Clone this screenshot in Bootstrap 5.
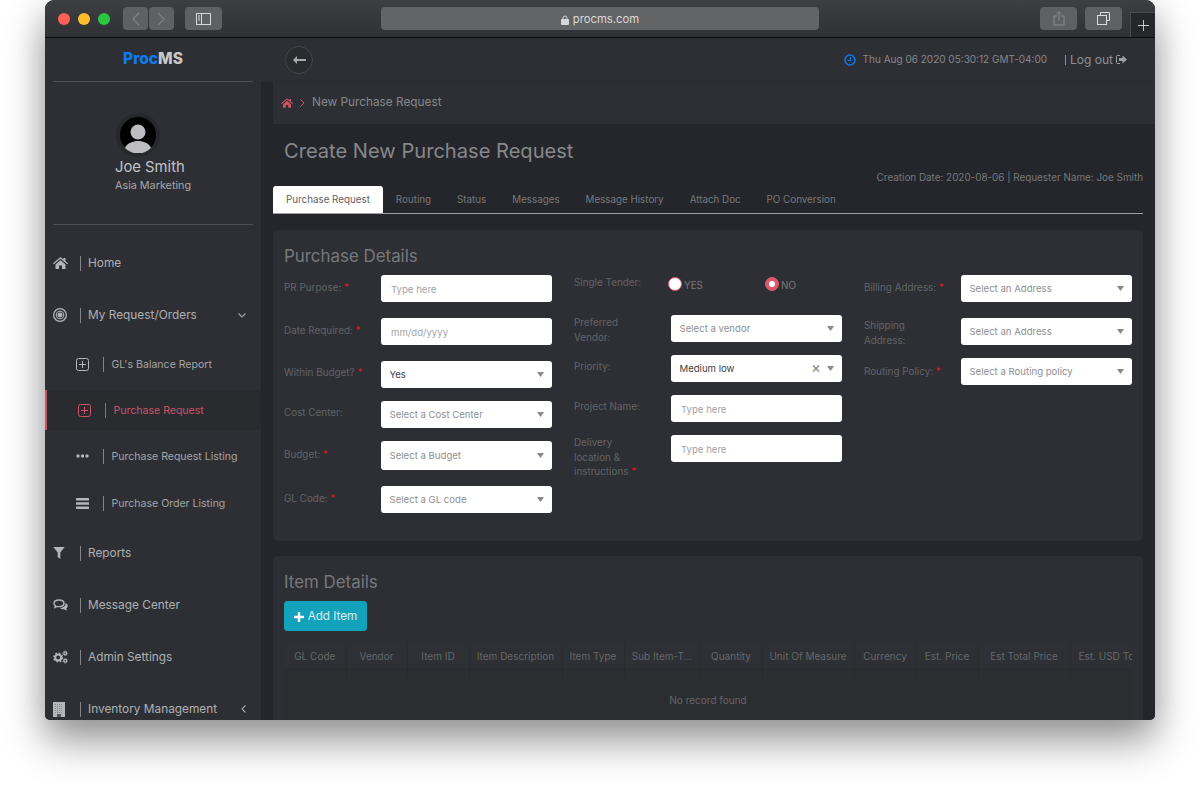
<!DOCTYPE html>
<html lang="en">
<head>
<meta charset="UTF-8" />
<title>ProcMS</title>
<link href="https://cdn.jsdelivr.net/npm/bootstrap@5.3.0/dist/css/bootstrap.min.css" rel="stylesheet" />
<style>
  html, body { height: 785px; overflow: hidden; background: #fff; }
  body { font-family: Inter, "Liberation Sans", sans-serif; }
  .mac-window { width: 1110px; height: 720px; margin-left: 45px; border-radius: 9px 9px 5px 5px; overflow: hidden; background: #2e2f34; }
  .window-shadow { width: 1110px; height: 720px; margin-left: 45px; position: absolute; top: 0; left: 0; border-radius: 9px; box-shadow: 0 22px 40px rgba(0,0,0,.38), 0 4px 30px rgba(0,0,0,.12); }
  .mac-bar { height: 38px; background: linear-gradient(#3e3f42, #303134); border-bottom: 1px solid #0b0b0c; position: relative; padding-left: 13px; }
  .light { width: 12px; height: 12px; border-radius: 50%; margin-right: 8px; }
  .mac-btn { height: 23px; background: #5f6062; border-radius: 4px; }
  .url-bar { width: 438px; height: 23px; background: #636466; border-radius: 4px; color: #d8d8d8; font-size: 11.3px; margin-left: 159px; padding-top: 2px; }
  .new-tab { position: absolute; right: 0; bottom: 0; width: 25px; height: 25px; background: #25262a; border: 1px solid #4a4b4e; border-right: 0; border-bottom: 0; }
  .app-body { height: 682px; }
  .side { width: 216px; background: #2e2f34; color: #aeafb3; flex: none; overflow: hidden; }
  .side-logo { height: 44px; margin: 0 8px; border-bottom: 1px solid #4e4f54; font-weight: 800; font-size: 15.5px; color: #c6c7ca; padding-bottom: 1px; }
  .side-logo span { color: #0d7bf2; }
  .side-user { height: 143px; margin: 0 8px; border-bottom: 1px solid #4e4f54; padding: 31px 0 0 62px; }
  .avatar { width: 44px; height: 44px; border-radius: 50%; background: #27282c; margin-left: 1px; }
  .user-name { font-size: 14.8px; line-height: 18px; margin-top: 1px; color: #c2c3c6; }
  .user-team { font-size: 10.8px; line-height: 16px; margin-top: 2px; color: #a6a7ab; }
  .side-menu { padding-top: 12px; }
  .menu-main { height: 52px; padding-left: 8px; font-size: 11.85px; }
  .menu-main .menu-ico { width: 15px; }
  .menu-main .menu-txt { margin-left: 12px; padding-left: 7px; border-left: 1px solid #85868a; line-height: 15px; }
  .menu-sub { height: 46px; padding-left: 31px; font-size: 10.55px; color: #a3a4a8; }
  .menu-sub.last-sub { height: 48px; }
  .menu-sub .menu-ico { width: 13px; }
  .menu-sub .menu-txt { margin-left: 14px; padding-left: 7.5px; border-left: 1px solid #85868a; line-height: 15px; }
  .menu-sub.on { height: 40px; margin: 3px 0; color: #cc5266; background: #2a2b2f; border-left: 2px solid #cc5266; padding-left: 31px; }
  .menu-sub.on .menu-txt { border-left-color: #cc5266; }
  .menu-arrow { margin-left: auto; margin-right: 15px; }
  .content { min-width: 0; background: #25262b; }
  .top-row { height: 44px; background: #2e2f34; padding: 0 28px 0 24px; border-bottom: 1px solid #2a2b30; color: #8f9094; }
  .back-btn { width: 28px; height: 28px; border: 1px solid #46474c; border-radius: 50%; background: #2a2b2f; }
  .clock-txt { font-size: 10px; color: #87888c; margin-left: 7px; margin-right: 18px; }
  .logout { font-size: 12px; color: #8f9094; }
  .crumb-bar { height: 42px; margin-left: 12px; background: #2e2f34; padding: 0 0 1px 8px; font-size: 11.8px; color: #86878b; }
  .crumb-bar .sep { color: #cc5266; margin: 0 7px; }
  .page-wrap { padding: 0 12px; height: 596px; overflow: hidden; }
  .page-title { font-size: 20.1px; font-weight: 400; color: #87888c; margin: 14px 0 0 11px; line-height: 27px; }
  .page-meta { font-size: 9.9px; color: #77787c; text-align: right; line-height: 14px; margin-top: 5px; }
  .pr-tabs { border-bottom: 1px solid #a0a1a4; margin-top: 2px; height: 28px; gap: 0; }
  .pr-tabs .nav-link { font-size: 9.8px; color: #77787c; height: 27px; padding: 0 13px; line-height: 27px; border: 0; border-radius: 3px 3px 0 0; }
  .pr-tabs .nav-link.active { background: #fff; color: #5d5e62; }
  .panel-box { background: #2e2f34; border-radius: 5px; padding: 11px; margin-top: 16px; }
  .panel-title { font-size: 16.9px; font-weight: 400; color: #77787c; line-height: 24px; margin: 3px 0 7px; }
  .pr-row { --bs-gutter-x: 22px; }
  .fld { display: flex; height: 27px; font-size: 9.9px; color: #626367; line-height: 14.5px; }
  .fld.tall-fld { height: 29px; }
  .fld > label { width: 97px; flex: none; padding-top: 5px; }
  .fld > label.lbl-top { padding-top: 0; }
  .fld > label.lbl-up { padding-top: 4px; }
  .fld > label.lbl-down { padding-top: 6px; }
  .fld .req { color: #d51a2c; }
  .fld .form-control, .fld .form-select { height: 100%; min-height: 0; padding: 1px 9px 0 10px; font-size: 9.6px; border: 0; border-radius: 3px; color: #8e8f93; box-shadow: none; }
  .fld .form-select { padding-left: 8.500px; background-image: url("data:image/svg+xml,%3Csvg xmlns='http://www.w3.org/2000/svg' viewBox='0 0 8 5'%3E%3Cpath fill='%23888' d='M0 0h8L4 5z'/%3E%3C/svg%3E"); background-size: 7px 4.500px; background-position: right 8px center; }
  .fld .form-control::placeholder { color: #a2a3a7; }
  .fld .form-select.picked { color: #3d3e42; }
  .gap-a { margin-bottom: 16px; }
  .gap-b { margin-bottom: 13px; }
  .clear-x { position: absolute; right: 21px; top: 6px; font-size: 15px; line-height: 14px; color: #86878b; }
  .fld.radio-row { height: 40px; padding-top: 2px; }
  .radio-row > label { padding-top: 0; margin-top: -2px; }
  .radio-row .form-check-input { width: 14px; height: 14px; margin: 0 2px 0 -3px; border: 1px solid #dc5a6e; flex: none; }
  .radio-row .form-check-input:checked { background-color: #dc5a6e; border-color: #dc5a6e; }
  .radio-lbl { color: #77787c; line-height: 14px; margin-top: 1px; }
  .add-btn { --bs-btn-bg: #12a2bb; --bs-btn-border-color: #12a2bb; font-size: 11.7px; height: 30px; width: 83px; padding: 1px 0 0; border-radius: 3px; color: #dcebee; }
  .grid-wrap { margin-top: 12px; background: #2c2d31; border-radius: 3px; }
  .grid-tbl { table-layout: fixed; width: 848px; margin: 0; --bs-table-bg: transparent; }
  .grid-tbl th, .grid-tbl td { font-size: 10px; font-weight: 400; color: #65666a; text-align: center; white-space: nowrap; overflow: hidden; padding: 0; border: 0; }
  .grid-tbl thead th { height: 25px; line-height: 24px; padding-top: 1px; background: #2f3035; border-right: 1px solid #2b2c30; }
  .grid-tbl thead th:last-child { border-right: 0; text-align: left; padding-left: 8px; }
  .grid-tbl .blank td { height: 16px; border-right: 1px solid #292a2e; }
  .grid-tbl .blank td:last-child { border-right: 0; }
  .grid-tbl .empty td { height: 48px; vertical-align: top; padding-top: 9px; }
</style>
</head>
<body>
<div class="window-shadow"></div>
<div class="mac-window position-relative">
  <div class="mac-bar d-flex align-items-center">
    <div class="light" style="background:#ff5f57"></div>
    <div class="light" style="background:#febc2e"></div>
    <div class="light" style="background:#28c840"></div>
    <div class="mac-btn d-flex align-items-center justify-content-center" style="width:25px;margin-left:5px">
      <svg width="9" height="14" viewBox="0 0 9 14"><path d="M8 1 2 7l6 6" fill="none" stroke="#818284" stroke-width="1.2"/></svg>
    </div>
    <div class="mac-btn d-flex align-items-center justify-content-center" style="width:25px;margin-left:1px">
      <svg width="9" height="14" viewBox="0 0 9 14"><path d="m1 1 6 6-6 6" fill="none" stroke="#818284" stroke-width="1.2"/></svg>
    </div>
    <div class="mac-btn d-flex align-items-center justify-content-center" style="width:37px;margin-left:11px">
      <svg width="15" height="12" viewBox="0 0 15 12"><rect x=".5" y=".5" width="14" height="11" fill="none" stroke="#d8d8d8"/><path d="M5.500 0v12M2 3h2M2 5h2M2 7h2" stroke="#d8d8d8"/></svg>
    </div>
    <div class="url-bar d-flex align-items-center justify-content-center gap-1">
      <svg width="8" height="10" viewBox="0 0 8 10"><rect y="4" width="8" height="6" rx="1" fill="#d8d8d8"/><path d="M2 4.500V3a2 2 0 0 1 4 0v1.500" fill="none" stroke="#d8d8d8"/></svg>
      <span>procms.com</span>
    </div>
    <div class="mac-btn d-flex align-items-center justify-content-center" style="width:37px;margin-left:221px">
      <svg width="12" height="15" viewBox="0 0 12 15"><path d="M4 5H1v9h10V5H8M6 10V1M3.500 3 6 .8 8.500 3" fill="none" stroke="#8a8b8d"/></svg>
    </div>
    <div class="mac-btn d-flex align-items-center justify-content-center" style="width:37px;margin-left:8px">
      <svg width="13" height="13" viewBox="0 0 13 13"><path d="M3.500 3V.5h9v8H10" fill="none" stroke="#dcdcdc"/><rect x=".5" y="3.500" width="9" height="9" fill="none" stroke="#dcdcdc"/></svg>
    </div>
    <div class="new-tab d-flex align-items-center justify-content-center">
      <svg width="11" height="11" viewBox="0 0 11 11"><path d="M5.500 0v11M0 5.500h11" stroke="#c8c8c8"/></svg>
    </div>
  </div>

  <div class="app-body d-flex">
    <aside class="side">
      <div class="side-logo d-flex align-items-center justify-content-center"><div><span>Proc</span>MS</div></div>
      <div class="side-user d-flex flex-column align-items-start">
        <div class="avatar d-flex align-items-center justify-content-center">
          <svg width="36" height="36" viewBox="0 0 36 36"><circle cx="18" cy="18" r="18" fill="#000"/><circle cx="18" cy="15" r="7.500" fill="#bdbdc1"/><path d="M5 31c2-5 8-7 13-7s11 2 13 7a18 18 0 0 1-26 0z" fill="#bdbdc1"/></svg>
        </div>
        <div class="user-name">Joe Smith</div>
        <div class="user-team">Asia Marketing</div>
      </div>

      <nav class="side-menu">
        <div class="menu-main d-flex align-items-center">
          <span class="menu-ico d-flex"><svg width="15" height="12" viewBox="0 0 15 12"><path fill="#b5b6ba" d="M7.500 0 0 6.300l.8.900L7.500 1.700l6.700 5.500.8-.9L12.500 4.200V1h-2v1.500zM2.500 7.500V12h3.500V8.500h3V12h3.500V7.500l-5-4.200z"/></svg></span>
          <span class="menu-txt">Home</span>
        </div>
        <div class="menu-main d-flex align-items-center">
          <span class="menu-ico d-flex"><svg width="14" height="14" viewBox="0 0 14 14" fill="none" stroke="#b5b6ba"><circle cx="7" cy="7" r="6.300" stroke-width="1.300"/><circle cx="7" cy="7" r="3.800"/><circle cx="7" cy="7" r="2" fill="#b5b6ba"/></svg></span>
          <span class="menu-txt">My Request/Orders</span>
          <svg class="menu-arrow" width="8" height="5" viewBox="0 0 8 5"><path d="m.5.500 3.500 3.500L7.500.500" fill="none" stroke="#a3a4a8" stroke-width="1.100"/></svg>
        </div>
        <div class="menu-sub d-flex align-items-center">
          <span class="menu-ico d-flex"><svg width="13" height="13" viewBox="0 0 13 13" fill="none" stroke="#b5b6ba"><rect x=".5" y=".5" width="12" height="12" rx="2"/><path d="M6.500 3v7M3 6.500h7"/></svg></span>
          <span class="menu-txt">GL's Balance Report</span>
        </div>
        <div class="menu-sub on d-flex align-items-center">
          <span class="menu-ico d-flex"><svg width="13" height="13" viewBox="0 0 13 13" fill="none" stroke="#cc5266"><rect x=".5" y=".5" width="12" height="12" rx="2"/><path d="M6.500 3v7M3 6.500h7"/></svg></span>
          <span class="menu-txt">Purchase Request</span>
        </div>
        <div class="menu-sub d-flex align-items-center">
          <span class="menu-ico d-flex"><svg width="13" height="4" viewBox="0 0 13 4" fill="#b5b6ba"><circle cx="2" cy="2" r="1.700"/><circle cx="6.500" cy="2" r="1.700"/><circle cx="11" cy="2" r="1.700"/></svg></span>
          <span class="menu-txt">Purchase Request Listing</span>
        </div>
        <div class="menu-sub last-sub d-flex align-items-center">
          <span class="menu-ico d-flex"><svg width="13" height="11" viewBox="0 0 13 11" fill="#b5b6ba"><rect width="13" height="2.400" rx=".5"/><rect y="4.300" width="13" height="2.400" rx=".5"/><rect y="8.600" width="13" height="2.400" rx=".5"/></svg></span>
          <span class="menu-txt">Purchase Order Listing</span>
        </div>
        <div class="menu-main d-flex align-items-center">
          <span class="menu-ico d-flex"><svg width="12" height="12" viewBox="0 0 12 12"><path fill="#b5b6ba" d="M.3 0h11.400L7.300 5.500V12L4.700 10V5.500z"/></svg></span>
          <span class="menu-txt">Reports</span>
        </div>
        <div class="menu-main d-flex align-items-center">
          <span class="menu-ico d-flex"><svg width="15" height="12" viewBox="0 0 15 12"><path fill="none" stroke="#b5b6ba" stroke-width="1.400" d="M6 1c3 0 5 1.500 5 3.300S9 7.600 6 7.600c-.7 0-1.300 0-2-.2L2 8.500l.4-1.800C1.400 6 1 5.200 1 4.300 1 2.500 3 1 6 1z"/><path fill="#b5b6ba" d="M12.500 4c1.500.8 2.200 1.800 2.200 3 0 1-.5 1.800-1.400 2.500l.5 2.300-3-1.600c-1.500 0-3-.5-4-1.500 3 .3 6-1.200 5.700-4.700z"/></svg></span>
          <span class="menu-txt">Message Center</span>
        </div>
        <div class="menu-main d-flex align-items-center">
          <span class="menu-ico d-flex"><svg width="16" height="14" viewBox="0 0 16 14" fill="none" stroke="#b5b6ba"><circle cx="5.500" cy="7.500" r="3.200" stroke-width="2.200"/><circle cx="5.500" cy="7.500" r="4.700" stroke-width="1.400" stroke-dasharray="1.800 1.900"/><circle cx="13" cy="3" r="1.500" stroke-width="1.300"/><circle cx="13" cy="11" r="1.500" stroke-width="1.300"/><circle cx="13" cy="3" r="2.500" stroke-width=".9" stroke-dasharray="1 1"/><circle cx="13" cy="11" r="2.500" stroke-width=".9" stroke-dasharray="1 1"/></svg></span>
          <span class="menu-txt">Admin Settings</span>
        </div>
        <div class="menu-main d-flex align-items-center">
          <span class="menu-ico d-flex"><svg width="12" height="15" viewBox="0 0 12 15"><rect width="12" height="15" fill="#b5b6ba"/><path stroke="#85868a" stroke-width="1" stroke-dasharray="1 1" d="M2.500 2v9M4.500 2v9M6.500 2v9M8.500 2v9"/><rect x="4" y="12" width="4" height="3" fill="#55565a"/></svg></span>
          <span class="menu-txt">Inventory Management</span>
          <svg class="menu-arrow" width="5" height="8" viewBox="0 0 5 8"><path d="M4.500.500 1 4l3.500 3.500" fill="none" stroke="#a3a4a8" stroke-width="1.100"/></svg>
        </div>
      </nav>
    </aside>

    <main class="content flex-grow-1">
      <div class="top-row d-flex align-items-center">
        <div class="back-btn d-flex align-items-center justify-content-center">
          <svg width="13" height="8" viewBox="0 0 13 8"><path fill="#a9aaad" d="M4 0v3h9v2H4v3L0 4z"/></svg>
        </div>
        <div class="ms-auto d-flex align-items-center">
          <svg width="12" height="12" viewBox="0 0 12 12" fill="none" stroke="#0d7bf2"><circle cx="6" cy="6" r="5" stroke-width="1.500"/><path d="M6.500 3v3.500H3.500" stroke-width="1.200"/></svg>
          <span class="clock-txt">Thu Aug 06 2020 05:30:12 GMT-04:00</span>
          <span class="logout d-flex align-items-center">
            <span class="me-1" style="border-left:1px solid #8f9094;height:10px"></span>Log out
            <svg style="margin-left:3px" width="11" height="9" viewBox="0 0 11 9"><path fill="none" stroke="#a0a1a4" d="M4 .5H1.500a1 1 0 0 0-1 1v6a1 1 0 0 0 1 1H4"/><path fill="#a0a1a4" d="M3 3h3.500V.5L11 4.500l-4.500 4V6H3z"/></svg>
          </span>
        </div>
      </div>

      <div class="crumb-bar d-flex align-items-center">
        <svg width="12" height="10" viewBox="0 0 15 12"><path fill="#cc5266" d="M7.500 0 0 6.300l.8.900L7.500 1.700l6.700 5.500.8-.9L12.500 4.200V1h-2v1.500zM2.500 7.500V12h3.500V8.500h3V12h3.500V7.500l-5-4.200z"/></svg>
        <svg class="sep" width="5" height="8" viewBox="0 0 5 8"><path d="m.5.500 3.500 3.500L.5 7.500" fill="none" stroke="#cc5266"/></svg>
        <span>New Purchase Request</span>
      </div>

      <div class="page-wrap">
        <h1 class="page-title">Create New Purchase Request</h1>
        <div class="page-meta">Creation Date: 2020-08-06 | Requester Name: Joe Smith</div>
        <ul class="nav pr-tabs">
          <li class="nav-item"><a class="nav-link active" href="#">Purchase Request</a></li>
          <li class="nav-item"><a class="nav-link" href="#">Routing</a></li>
          <li class="nav-item"><a class="nav-link" href="#">Status</a></li>
          <li class="nav-item"><a class="nav-link" href="#">Messages</a></li>
          <li class="nav-item"><a class="nav-link" href="#">Message History</a></li>
          <li class="nav-item"><a class="nav-link" href="#">Attach Doc</a></li>
          <li class="nav-item"><a class="nav-link" href="#">PO Conversion</a></li>
        </ul>

        <section class="panel-box" style="height:311px">
          <h2 class="panel-title">Purchase Details</h2>
          <div class="row pr-row">
            <div class="col-4">
              <div class="fld gap-a"><label>PR Purpose: <span class="req">*</span></label><input class="form-control" placeholder="Type here"></div>
              <div class="fld gap-a"><label>Date Required: <span class="req">*</span></label><input class="form-control" placeholder="mm/dd/yyyy"></div>
              <div class="fld gap-b"><label class="lbl-up">Within Budget? <span class="req">*</span></label><select class="form-select picked"><option>Yes</option></select></div>
              <div class="fld gap-b"><label class="lbl-up">Cost Center:</label><select class="form-select"><option>Select a Cost Center</option></select></div>
              <div class="fld tall-fld gap-a"><label class="lbl-down">Budget: <span class="req">*</span></label><select class="form-select"><option>Select a Budget</option></select></div>
              <div class="fld"><label>GL Code: <span class="req">*</span></label><select class="form-select"><option>Select a GL code</option></select></div>
            </div>
            <div class="col-4">
              <div class="fld radio-row"><label>Single Tender:</label>
                <div class="d-flex flex-grow-1">
                  <div class="d-flex" style="width:97px"><input class="form-check-input" type="radio" name="tender"><span class="radio-lbl">YES</span></div>
                  <div class="d-flex"><input class="form-check-input" type="radio" name="tender" checked><span class="radio-lbl">NO</span></div>
                </div>
              </div>
              <div class="fld gap-b"><label class="lbl-top">Preferred<br>Vendor:</label><select class="form-select"><option>Select a vendor</option></select></div>
              <div class="fld gap-b"><label class="lbl-up">Priority:</label>
                <div class="position-relative flex-grow-1"><select class="form-select picked"><option>Medium low</option></select><span class="clear-x">×</span></div>
              </div>
              <div class="fld gap-b"><label class="lbl-up">Project Name:</label><input class="form-control" placeholder="Type here"></div>
              <div class="fld"><label class="lbl-top">Delivery<br>location &amp;<br>instructions <span class="req">*</span></label><input class="form-control" placeholder="Type here"></div>
            </div>
            <div class="col-4">
              <div class="fld gap-a"><label>Billing Address: <span class="req">*</span></label><select class="form-select"><option>Select an Address</option></select></div>
              <div class="fld gap-b"><label class="lbl-top">Shipping<br>Address:</label><select class="form-select"><option>Select an Address</option></select></div>
              <div class="fld"><label class="lbl-down">Routing Policy: <span class="req">*</span></label><select class="form-select"><option>Select a Routing policy</option></select></div>
            </div>
          </div>
        </section>

        <section class="panel-box" style="margin-top:15px;height:300px">
          <h2 class="panel-title">Item Details</h2>
          <button type="button" class="btn add-btn d-flex align-items-center justify-content-center gap-1">
            <svg width="10" height="10" viewBox="0 0 10 10"><path fill="#fff" d="M3.800 0h2.400v3.800H10v2.400H6.200V10H3.800V6.200H0V3.800h3.800z"/></svg>Add Item
          </button>
          <div class="grid-wrap">
            <table class="table grid-tbl">
              <colgroup>
                <col style="width:62px"><col style="width:61px"><col style="width:62px"><col style="width:93px"><col style="width:62px"><col style="width:76px"><col style="width:62px"><col style="width:92px"><col style="width:62px"><col style="width:62px"><col style="width:92px"><col style="width:62px">
              </colgroup>
              <thead>
                <tr><th>GL Code</th><th>Vendor</th><th>Item ID</th><th>Item Description</th><th>Item Type</th><th>Sub Item-T...</th><th>Quantity</th><th>Unit Of Measure</th><th>Currency</th><th>Est. Price</th><th>Est Total Price</th><th>Est. USD Total</th></tr>
              </thead>
              <tbody>
                <tr class="blank"><td></td><td></td><td></td><td></td><td></td><td></td><td></td><td></td><td></td><td></td><td></td><td></td></tr>
                <tr class="empty"><td colspan="12">No record found</td></tr>
              </tbody>
            </table>
          </div>
        </section>
      </div>
    </main>
  </div>
</div>
<script src="https://cdn.jsdelivr.net/npm/bootstrap@5.3.0/dist/js/bootstrap.bundle.min.js"></script>
</body>
</html>
